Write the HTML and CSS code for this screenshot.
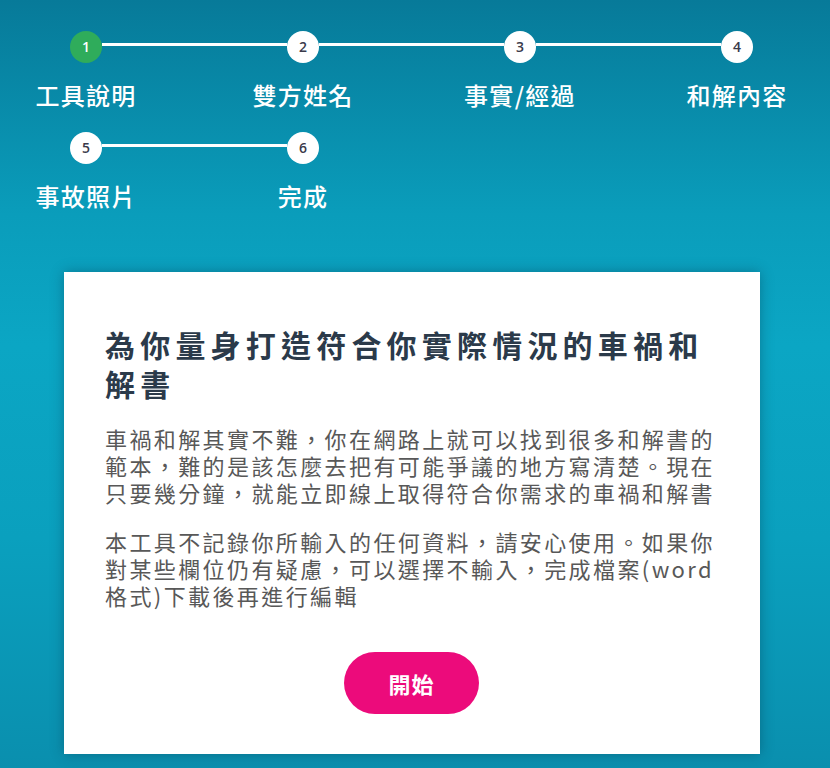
FILE: index.html
```html
<!DOCTYPE html>
<html lang="zh-Hant">
<head>
<meta charset="utf-8">
<title>車禍和解書產生器</title>
<link rel="stylesheet" href="styles.css">
</head>
<body>
<div class="page">
  <div class="stepper">
    <div class="step-row">
      <div class="step has-line active"><div class="dot">1</div><div class="label">工具說明</div></div>
      <div class="step has-line"><div class="dot">2</div><div class="label">雙方姓名</div></div>
      <div class="step has-line"><div class="dot">3</div><div class="label">事實/經過</div></div>
      <div class="step"><div class="dot">4</div><div class="label">和解內容</div></div>
    </div>
    <div class="step-row">
      <div class="step has-line"><div class="dot">5</div><div class="label">事故照片</div></div>
      <div class="step"><div class="dot">6</div><div class="label">完成</div></div>
    </div>
  </div>
  <div class="card">
    <h1 class="card-title">為你量身打造符合你實際情況的車禍和解書</h1>
    <p class="card-text">車禍和解其實不難，你在網路上就可以找到很多和解書的範本，難的是該怎麼去把有可能爭議的地方寫清楚。現在只要幾分鐘，就能立即線上取得符合你需求的車禍和解書</p>
    <p class="card-text">本工具不記錄你所輸入的任何資料，請安心使用。如果你對某些欄位仍有疑慮，可以選擇不輸入，完成檔案(word格式)下載後再進行編輯</p>
    <div class="actions"><button class="start-btn" type="button">開始</button></div>
  </div>
</div>
</body>
</html>
```
FILE: styles.css
```css
html, body {
  margin: 0;
  padding: 0;
}
body {
  min-height: 768px;
  background: linear-gradient(to bottom, #077a99 0%, #0a9dbb 28%, #0ba6c4 45%, #0aa0be 70%, #0a8fae 100%);
  font-family: "Open Sans", "Noto Sans CJK TC", sans-serif;
  overflow: hidden;
}
.page {
  padding-top: 31px;
}
.stepper {
  display: flex;
  flex-direction: column;
  gap: 22px;
}
.step-row {
  display: flex;
  gap: 117px;
  padding-left: 36px;
}
.step {
  position: relative;
  width: 100px;
  display: flex;
  flex-direction: column;
  align-items: center;
}
.step.has-line::after {
  content: "";
  position: absolute;
  top: 12px;
  left: 66px;
  width: 185px;
  height: 3px;
  background: #ffffff;
}
.dot {
  position: relative;
  z-index: 1;
  width: 32px;
  height: 32px;
  border-radius: 50%;
  background: #ffffff;
  color: #3a3a4a;
  font-family: "Open Sans", sans-serif;
  font-weight: 600;
  font-size: 14px;
  line-height: 32px;
  text-align: center;
}
.step.active .dot {
  background: #2fac5b;
  color: #ffffff;
}
.label {
  margin-top: 17px;
  font-family: "Noto Sans CJK TC", sans-serif;
  font-weight: 500;
  font-size: 24px;
  line-height: 30px;
  letter-spacing: 1.3px;
  color: #ffffff;
  white-space: nowrap;
}
.card {
  margin: 61px 0 0 64px;
  width: 696px;
  box-sizing: border-box;
  padding: 53px 42px 40px 41px;
  background: #ffffff;
  box-shadow: 0 0 12px rgba(0, 40, 60, 0.35);
}
.card-title {
  margin: 0 0 22px;
  font-family: "Noto Sans CJK TC", sans-serif;
  font-weight: 700;
  font-size: 30px;
  line-height: 39px;
  letter-spacing: 5.2px;
  color: #2b3a4a;
}
.card-text {
  margin: 0 0 22px;
  font-family: "Noto Sans CJK TC", sans-serif;
  font-size: 22px;
  line-height: 27px;
  letter-spacing: 2.4px;
  color: #585858;
}
.card-text:last-of-type {
  margin-bottom: 0;
}
.actions {
  display: flex;
  justify-content: center;
  margin-top: 43px;
}
.start-btn {
  width: 135px;
  height: 62px;
  border: none;
  border-radius: 31px;
  background: #ec0b7b;
  color: #ffffff;
  font-family: "Noto Sans CJK TC", sans-serif;
  font-weight: 700;
  font-size: 22px;
  letter-spacing: 1px;
  cursor: pointer;
}
```
